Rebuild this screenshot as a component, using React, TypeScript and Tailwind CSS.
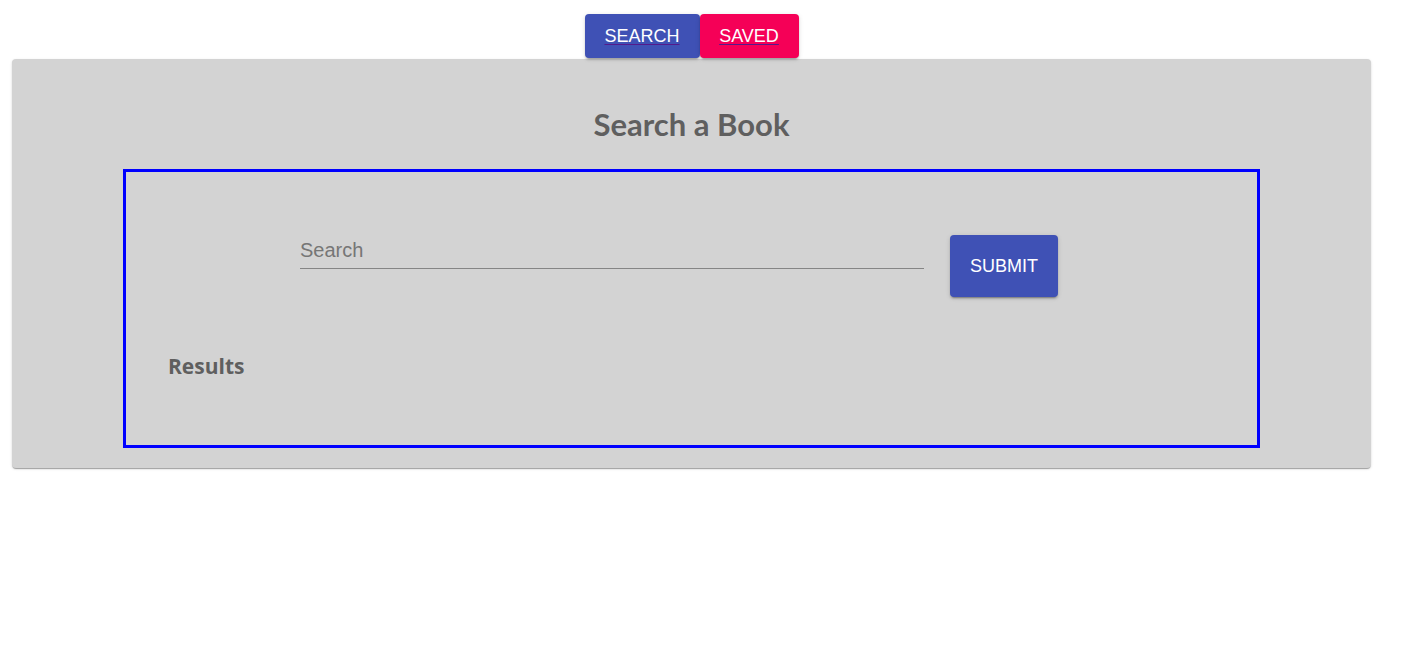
import React from "react";

export default function App() {
  const btnShadow =
    "shadow-[0px_3px_1px_-2px_rgba(0,0,0,0.2),0px_2px_2px_0px_rgba(0,0,0,0.14),0px_1px_5px_0px_rgba(0,0,0,0.12)]";
  return (
    <div className="min-h-screen bg-white">
      <div className="w-[1383px]">
        <nav className="flex justify-center pt-[14px]">
          <button
            className={`w-[115px] h-[44px] rounded-[4px] bg-[#3f51b5] text-white text-[18px] font-['Liberation_Sans',Arial,sans-serif] ${btnShadow}`}
          >
            <span className="underline decoration-[#551a8b] underline-offset-[2px]">SEARCH</span>
          </button>
          <button
            className={`w-[99px] h-[44px] rounded-[4px] bg-[#f50057] text-white text-[18px] font-['Liberation_Sans',Arial,sans-serif] ${btnShadow}`}
          >
            <span className="underline decoration-[#551a8b] underline-offset-[2px]">SAVED</span>
          </button>
        </nav>
        <div className="mx-[12px] mt-px rounded-[4px] bg-[#d3d3d3] shadow-[0px_2px_1px_-1px_rgba(0,0,0,0.2),0px_1px_1px_0px_rgba(0,0,0,0.14),0px_1px_3px_0px_rgba(0,0,0,0.12)] pt-[47px] pb-[20px]">
          <h1 className="text-center text-[31px] leading-[36px] font-bold text-[#5f5f5f] font-['Lato','Open_Sans',sans-serif]">
            Search a Book
          </h1>
          <div className="mt-[27px] ml-[111px] w-[1137px] border-[3px] border-[#0000ff] pt-[63px] pb-[67px]">
            <div className="flex items-start ml-[174px]">
              <div className="mt-[3px] w-[624px] flex flex-col">
                <input
                  placeholder="Search"
                  className="h-[24px] leading-[24px] text-[20px] bg-transparent outline-none text-[#333] placeholder:text-[#767676] font-['Liberation_Sans',Arial,sans-serif]"
                />
                <div className="mt-[6px] h-px bg-[#858585]" />
              </div>
              <button
                className={`ml-[26px] w-[108px] h-[62px] rounded-[4px] bg-[#3f51b5] text-white text-[18px] font-['Liberation_Sans',Arial,sans-serif] ${btnShadow}`}
              >
                SUBMIT
              </button>
            </div>
            <div className="mt-[57px] ml-[42px] text-[21px] leading-[24px] font-bold text-[#5f5f5f] font-['Open_Sans','Lato',sans-serif]">
              Results
            </div>
          </div>
        </div>
      </div>
    </div>
  );
}
